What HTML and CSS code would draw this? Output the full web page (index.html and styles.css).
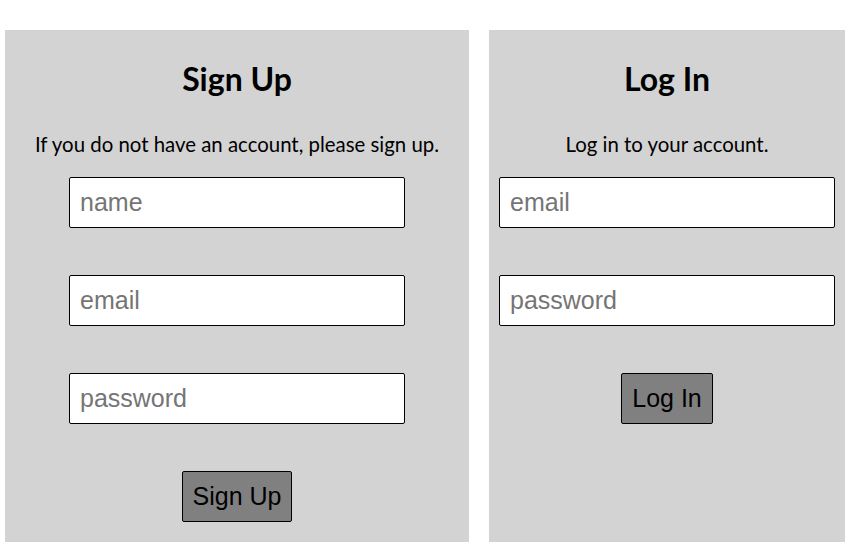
FILE: index.html
```html
<!DOCTYPE html>
<html>
<head>
<meta charset="utf-8">
<link rel="stylesheet" href="styles.css">
</head>
<body>
<div class="forms">
  <form class="panel panel-signup">
    <h1 class="title">Sign Up</h1>
    <p class="intro">If you do not have an account, please sign up.</p>
    <div class="fields">
      <input class="field" type="text" placeholder="name">
      <input class="field" type="text" placeholder="email">
      <input class="field" type="password" placeholder="password">
      <button class="btn" type="button">Sign Up</button>
    </div>
  </form>
  <form class="panel panel-login">
    <h1 class="title">Log In</h1>
    <p class="intro">Log in to your account.</p>
    <div class="fields">
      <input class="field" type="text" placeholder="email">
      <input class="field" type="password" placeholder="password">
      <button class="btn" type="button">Log In</button>
    </div>
  </form>
</div>
</body>
</html>
```
FILE: styles.css
```css
html, body {
  margin: 0;
  padding: 0;
  background: #ffffff;
}
body {
  font-family: Lato, "Open Sans", sans-serif;
  color: #000;
}
.forms {
  display: flex;
  align-items: stretch;
  gap: 20px;
  padding: 30px 0 0 5px;
}
.panel {
  background: #d3d3d3;
  box-sizing: border-box;
  padding: 31px 10px 40px;
  display: flex;
  flex-direction: column;
  align-items: center;
}
.panel-signup {
  width: 464px;
}
.panel-login {
  width: 356px;
}
.title {
  margin: 0;
  font-size: 32px;
  line-height: 36px;
  font-weight: 700;
}
.intro {
  margin: 35px 0 21px;
  font-size: 20.4px;
  line-height: 24px;
  white-space: nowrap;
}
.fields {
  display: flex;
  flex-direction: column;
  align-items: center;
  gap: 47px;
}
.field {
  box-sizing: border-box;
  width: 336px;
  height: 51px;
  margin: 0;
  padding: 10px;
  border: 1px solid #000;
  border-radius: 2px;
  background: #fff;
  font-family: "Liberation Sans", Arial, sans-serif;
  font-size: 25px;
}
.field::placeholder {
  color: #757575;
}
.btn {
  box-sizing: border-box;
  height: 51px;
  margin: 0;
  padding: 10px;
  border: 1px solid #000;
  border-radius: 2px;
  background: #808080;
  color: #000;
  font-family: "Liberation Sans", Arial, sans-serif;
  font-size: 25px;
}
```
